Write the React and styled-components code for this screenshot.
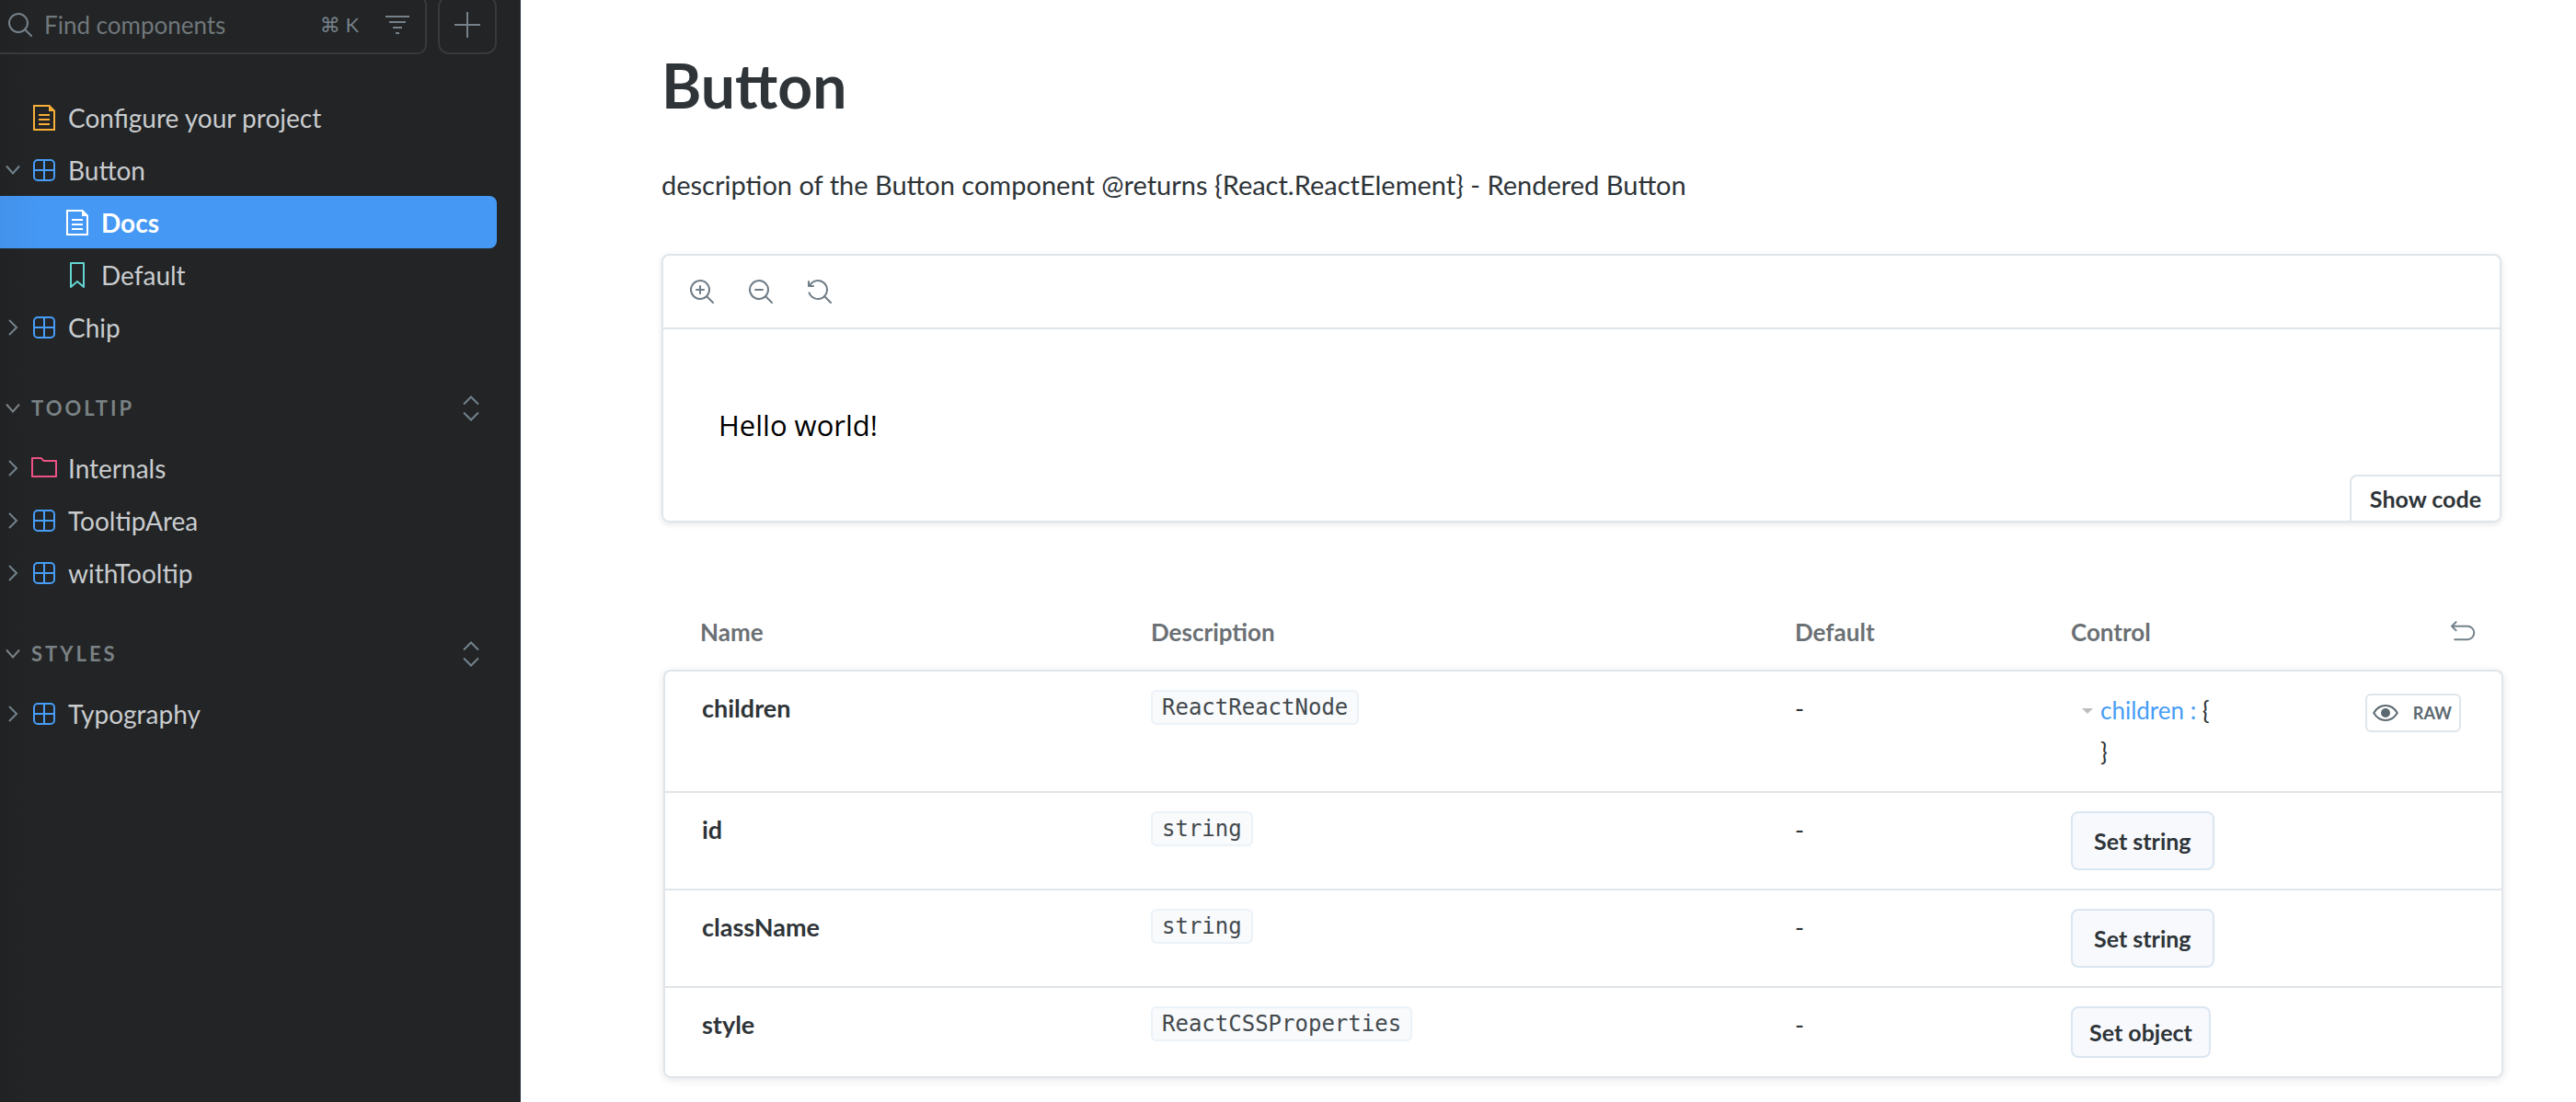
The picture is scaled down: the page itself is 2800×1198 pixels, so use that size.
import React from 'react';
import styled, { createGlobalStyle } from 'styled-components';

const GlobalStyle = createGlobalStyle`
  *, *::before, *::after { box-sizing: border-box; }
  body { margin: 0; background: #ffffff; }
  body, button, input { font-family: Lato, "Open Sans", sans-serif; }
  button { margin: 0; padding: 0; border: 0; background: none; color: inherit; cursor: pointer; }
  svg { display: block; flex: none; }
`;

const color = {
  line: '#dfe5ea',
  ink: '#2e3438',
  muted: '#73828c',
  blue: '#479df7',
  yellow: '#f8ae37',
  teal: '#63d6d3',
  pink: '#ee5284',
};

/* ---------- icons ---------- */

const Glyph = ({ size = 28, tint = 'currentColor', children }) => (
  <svg width={size} height={size} viewBox="0 0 14 14" fill={tint} fillRule="evenodd" clipRule="evenodd" aria-hidden="true">
    {children}
  </svg>
);

const LENS =
  'M9.544 10.206a5.5 5.5 0 11.662-.662.5.5 0 01.148.102l3 3a.5.5 0 01-.708.708l-3-3a.5.5 0 01-.102-.148zM10.5 6a4.5 4.5 0 11-9 0 4.5 4.5 0 019 0z';

const SearchIcon = () => <Glyph><path d={LENS} /></Glyph>;
const ZoomInIcon = () => (
  <Glyph>
    <path d="M6 3.5a.5.5 0 01.5.5v1.5H8a.5.5 0 010 1H6.5V8a.5.5 0 01-1 0V6.5H4a.5.5 0 010-1h1.5V4a.5.5 0 01.5-.5z" />
    <path d={LENS} />
  </Glyph>
);
const ZoomOutIcon = () => (
  <Glyph>
    <path d="M4 5.5a.5.5 0 000 1h4a.5.5 0 000-1H4z" />
    <path d={LENS} />
  </Glyph>
);
const ZoomResetIcon = () => (
  <Glyph>
    <path d="M1.5 2.837V1.5a.5.5 0 00-1 0V4a.5.5 0 00.5.5h2.5a.5.5 0 000-1H2.258a4.5 4.5 0 11-.496 4.016.5.5 0 10-.942.337 5.502 5.502 0 008.724 2.353.5.5 0 00.102.148l3 3a.5.5 0 00.708-.708l-3-3a.5.5 0 00-.148-.102A5.5 5.5 0 101.5 2.837z" />
  </Glyph>
);
const FilterIcon = () => (
  <Glyph><path d="M.5 2h13v1H.5zM2.5 5h9v1h-9zM4.5 8h5v1h-5zM6 11h2v1H6z" /></Glyph>
);
const PlusIcon = () => (
  <Glyph><path d="M6.5 0h1v6.5H14v1H7.5V14h-1V7.5H0v-1h6.5z" /></Glyph>
);
const DocumentIcon = ({ tint }) => (
  <Glyph tint={tint}>
    <path d="M4 5h6v1H4zM4 7.5h6v1H4zM4 10h6v1H4z" />
    <path d="M1 0h9l3 3v11H1zM2 1v12h10V3.5H9.5V1z" />
  </Glyph>
);
const ComponentIcon = ({ tint }) => (
  <Glyph tint={tint}>
    <path d="M3.5 1A2.5 2.5 0 001 3.5v7A2.5 2.5 0 003.5 13h7a2.5 2.5 0 002.5-2.5v-7A2.5 2.5 0 0010.5 1h-7zM12 6.5H7.5V2h3A1.5 1.5 0 0112 3.5v3zm0 1v3a1.5 1.5 0 01-1.5 1.5h-3V7.5H12zM6.5 12V7.5H2v3A1.5 1.5 0 003.5 12h3zM2 6.5h4.5V2h-3A1.5 1.5 0 002 3.5v3z" />
  </Glyph>
);
const BookmarkIcon = ({ tint }) => (
  <Glyph tint={tint}>
    <path d="M3.5 0h7a.5.5 0 01.5.5v13a.5.5 0 01-.825.38L7 11.159l-3.175 2.72A.5.5 0 013 13.5V.5a.5.5 0 01.5-.5zM4 12.413l2.664-2.284a.5.5 0 01.661-.008L10 12.412V1H4v11.413z" />
  </Glyph>
);
const FolderIcon = ({ tint }) => (
  <Glyph tint={tint}>
    <path d="M6.586 3.504l-1.5-1.5H1v9h12v-7.5H6.586zm.414-1L5.793 1.297a1 1 0 00-.707-.293H.5a.5.5 0 00-.5.5v10a.5.5 0 00.5.5h13a.5.5 0 00.5-.5v-8.5a.5.5 0 00-.5-.5H7z" />
  </Glyph>
);
const EyeIcon = () => (
  <Glyph>
    <circle cx="7" cy="7" r="2.5" />
    <path d="M.6 7C2.200 4.300 4.400 3 7 3s4.800 1.300 6.400 4c-1.600 2.700-3.800 4-6.400 4S2.200 9.700.6 7z" fill="none" stroke="currentColor" strokeLinejoin="round" />
  </Glyph>
);
const UndoIcon = () => (
  <Glyph>
    <path d="M3.3 1.6L1 3.900l2.300 2.300M1.200 3.900h8.300a3.600 3.600 0 010 7.200H2.600" fill="none" stroke="currentColor" strokeLinecap="round" strokeLinejoin="round" />
  </Glyph>
);
const Chevron = ({ open }) => (
  <svg width="20" height="20" viewBox="0 0 20 20" fill="none" stroke="currentColor" strokeWidth="2" aria-hidden="true">
    <path d={open ? 'M3 5.5l7 8 7-8' : 'M6 2l8 8-8 8'} />
  </svg>
);
const ExpandIcon = () => (
  <svg width="28" height="28" viewBox="0 0 28 28" fill="none" stroke="currentColor" strokeWidth="2" aria-hidden="true">
    <path d="M6 9.500l8-8 8 8M6 18.500l8 8 8-8" />
  </svg>
);

/* ---------- sidebar ---------- */

const Shell = styled.div`
  display: flex;
  min-height: 100vh;
  overflow: hidden;
`;

const Sidebar = styled.aside`
  flex: 0 0 566px;
  min-width: 0;
  padding-right: 25px;
  border-right: 1px solid #29323d;
  background: linear-gradient(90deg, #202223, #222425 30px);
  color: #c9cccf;
`;

const SearchRow = styled.div`
  display: flex;
  gap: 12px;
  margin-top: -5px;
  margin-bottom: 40px;
  color: #76818a;
`;

const SearchBox = styled.form`
  flex: 1;
  min-width: 0;
  display: flex;
  align-items: center;
  height: 64px;
  padding: 0 16px 0 8px;
  border: 2px solid #37393c;
  border-left: 0;
  border-radius: 0 10px 10px 0;
`;

const SearchInput = styled.input`
  flex: 1;
  min-width: 0;
  margin: 0 12px;
  padding: 0;
  border: 0;
  outline: 0;
  background: transparent;
  color: inherit;
  font-size: 26px;
  line-height: 32px;
  &::placeholder { color: #70777b; opacity: 1; }
`;

const Shortcut = styled.kbd`
  margin-right: 28px;
  font: 22px/32px Lato, "DejaVu Sans", sans-serif;
`;

const AddButton = styled.button`
  display: grid;
  place-items: center;
  flex: none;
  width: 64px;
  height: 64px;
  border: 2px solid #37393c;
  border-radius: 12px;
`;

const TreeList = styled.ul`
  margin: 0;
  padding: 0;
  list-style: none;
`;

const TreeLink = styled.a`
  display: flex;
  align-items: center;
  gap: 12px;
  height: 57px;
  padding-left: ${(p) => (p.$nested ? '36px' : '0')};
  border-radius: 0 8px 8px 0;
  background: ${(p) => (p.$active ? 'linear-gradient(90deg, #4391ea, #4599f5 50px)' : 'none')};
  color: ${(p) => (p.$active ? '#ffffff' : 'inherit')};
  font-size: 28px;
  font-weight: ${(p) => (p.$active ? 700 : 400)};
  line-height: 40px;
  text-decoration: none;
`;

const TreeIcons = styled.span`
  display: flex;
  align-items: center;
  color: ${color.muted};
`;

const ChevronSlot = styled.span`
  width: 34px;
  padding-left: 4px;
`;

const GroupHeader = styled.div`
  display: flex;
  align-items: center;
  justify-content: space-between;
  height: 56px;
  margin: 32px 0 8px;
  padding-right: 14px;
  color: ${color.muted};
`;

const GroupToggle = styled.button`
  display: flex;
  align-items: center;
  color: #7a8184;
  font-size: 22px;
  font-weight: 700;
  line-height: 32px;
  letter-spacing: 3px;
`;

const kinds = {
  docs: [DocumentIcon, color.yellow],
  component: [ComponentIcon, color.blue],
  story: [BookmarkIcon, color.teal],
  folder: [FolderIcon, color.pink],
};

function TreeItem({ kind, label, open, leaf, nested, active }) {
  const [Icon, tint] = kinds[kind];
  return (
    <li>
      <TreeLink href="#" $nested={nested} $active={active} aria-current={active ? 'page' : undefined}>
        <TreeIcons>
          <ChevronSlot>{!leaf && <Chevron open={open} />}</ChevronSlot>
          <Icon tint={active ? '#ffffff' : tint} />
        </TreeIcons>
        {label}
      </TreeLink>
    </li>
  );
}

function Group({ title, children }) {
  return (
    <section>
      <GroupHeader>
        <GroupToggle type="button" aria-expanded="true">
          <ChevronSlot><Chevron open /></ChevronSlot>
          {title}
        </GroupToggle>
        <button type="button" aria-label={`Expand all in ${title}`}><ExpandIcon /></button>
      </GroupHeader>
      <TreeList>{children}</TreeList>
    </section>
  );
}

/* ---------- docs page ---------- */

const Main = styled.main`
  flex: 1;
  min-width: 0;
  padding: 57px 79px 24px 153px;
  color: ${color.ink};
`;

const Title = styled.h1`
  margin: 0 0 48px;
  font-size: 66px;
  font-weight: 700;
  line-height: 72px;
`;

const Lead = styled.p`
  margin: 0 0 51px;
  font-size: 29px;
  line-height: 48px;
`;

const Preview = styled.section`
  position: relative;
  margin-right: 2px;
  border: 2px solid ${color.line};
  border-radius: 8px;
  box-shadow: 0 2px 6px rgba(0, 0, 0, 0.1);
`;

const PreviewBar = styled.div`
  display: flex;
  align-items: center;
  gap: 36px;
  height: 80px;
  padding-left: 28px;
  border-bottom: 2px solid ${color.line};
  color: #707d87;
`;

const Canvas = styled.div`
  padding: 84px 60px;
  color: #000000;
  font-family: "Open Sans", sans-serif;
  font-size: 31px;
  line-height: 40px;
`;

const ShowCode = styled.button`
  position: absolute;
  right: 0;
  bottom: 0;
  height: 50px;
  padding: 0 20px;
  border: 2px solid ${color.line};
  border-width: 2px 0 0 2px;
  border-radius: 8px 0 6px 0;
  background: #ffffff;
  color: ${color.ink};
  font-size: 25px;
  font-weight: 700;
`;

const ArgsTable = styled.table`
  width: calc(100% - 2px);
  margin: 78px 0 0 2px;
  border-collapse: separate;
  border-spacing: 0;
  table-layout: fixed;
  text-align: left;
`;

const Col = styled.col`
  width: ${(p) => p.$width};
`;

const HeadCell = styled.th`
  height: 82px;
  padding: 0 30px;
  color: #6b7074;
  font-size: 26px;
  font-weight: 700;
  line-height: 40px;
  &:first-child { padding-left: 40px; }
`;

const HeadSplit = styled.div`
  display: flex;
  align-items: center;
  justify-content: space-between;
`;

const ResetButton = styled.button`
  color: ${color.muted};
`;

const Body = styled.tbody`
  border-radius: 8px;
  box-shadow: 0 2px 10px rgba(0, 0, 0, 0.1);
`;

const Cell = styled.td`
  padding: 20px 30px;
  border-top: 2px solid ${color.line};
  background: #ffffff;
  font-size: 27px;
  line-height: 40px;
  vertical-align: top;
  &:first-child { padding-left: 40px; border-left: 2px solid ${color.line}; font-weight: 700; }
  &:last-child { border-right: 2px solid ${color.line}; }
  tr:first-child > &:first-child { border-top-left-radius: 8px; }
  tr:first-child > &:last-child { border-top-right-radius: 8px; }
  tr:last-child > & { border-bottom: 2px solid ${color.line}; }
  tr:last-child > &:first-child { border-bottom-left-radius: 8px; }
  tr:last-child > &:last-child { border-bottom-right-radius: 8px; }
`;

const TypeTag = styled.code`
  display: inline-block;
  vertical-align: top;
  padding: 0 10px;
  border: 2px solid #ebf2f8;
  border-radius: 6px;
  background: #f8fafc;
  color: #43494d;
  font: 24px/34px "DejaVu Sans Mono", monospace;
`;

const SetButton = styled.button`
  display: block;
  height: ${(p) => (p.$compact ? '56px' : '64px')};
  padding: 0 ${(p) => (p.$compact ? '18px' : '23px')};
  border: 2px solid #dbe6f1;
  border-radius: 8px;
  background: #f7f9fd;
  color: ${color.ink};
  font-size: 25px;
  font-weight: 700;
`;

const ObjectControl = styled.div`
  display: flex;
  align-items: flex-start;
  justify-content: space-between;
  padding: 0 14px 0 12px;
  font-size: 26px;
  line-height: 45px;
`;

const TreeToggle = styled.button`
  display: flex;
  align-items: center;
  gap: 8px;
  font-size: inherit;
  line-height: inherit;
  &::before {
    content: "";
    border: 6px solid transparent;
    border-top: 6px solid #bbbdbf;
    border-bottom: 0;
  }
`;

const KeyName = styled.span`
  color: ${color.blue};
`;

const Closing = styled.div`
  padding-left: 20px;
`;

const RawButton = styled.button`
  display: flex;
  align-items: center;
  gap: 16px;
  height: 42px;
  margin-top: 4px;
  padding: 0 8px 0 6px;
  border: 2px solid ${color.line};
  border-radius: 6px;
  color: #5c6870;
  font-size: 18px;
  font-weight: 700;
`;

function ChildrenControl() {
  return (
    <ObjectControl>
      <div>
        <TreeToggle type="button" aria-expanded="true">
          <span><KeyName>children : </KeyName>{'{'}</span>
        </TreeToggle>
        <Closing>{'}'}</Closing>
      </div>
      <RawButton type="button"><EyeIcon />RAW</RawButton>
    </ObjectControl>
  );
}

const args = [
  { name: 'children', type: 'ReactReactNode', control: <ChildrenControl /> },
  { name: 'id', type: 'string', control: <SetButton type="button">Set string</SetButton> },
  { name: 'className', type: 'string', control: <SetButton type="button">Set string</SetButton> },
  { name: 'style', type: 'ReactCSSProperties', control: <SetButton type="button" $compact>Set object</SetButton> },
];

export default function App() {
  return (
    <Shell>
      <GlobalStyle />
      <Sidebar>
        <SearchRow>
          <SearchBox role="search">
            <SearchIcon />
            <SearchInput type="text" placeholder="Find components" aria-label="Find components" />
            <Shortcut>⌘ K</Shortcut>
            <button type="button" aria-label="Filter"><FilterIcon /></button>
          </SearchBox>
          <AddButton type="button" aria-label="Create a new story"><PlusIcon /></AddButton>
        </SearchRow>
        <TreeList>
          <TreeItem kind="docs" label="Configure your project" leaf />
          <TreeItem kind="component" label="Button" open />
          <TreeItem kind="docs" label="Docs" leaf nested active />
          <TreeItem kind="story" label="Default" leaf nested />
          <TreeItem kind="component" label="Chip" />
        </TreeList>
        <Group title="TOOLTIP">
          <TreeItem kind="folder" label="Internals" />
          <TreeItem kind="component" label="TooltipArea" />
          <TreeItem kind="component" label="withTooltip" />
        </Group>
        <Group title="STYLES">
          <TreeItem kind="component" label="Typography" />
        </Group>
      </Sidebar>
      <Main>
        <Title>Button</Title>
        <Lead>description of the Button component @returns {'{React.ReactElement}'} - Rendered Button</Lead>
        <Preview>
          <PreviewBar>
            <button type="button" aria-label="Zoom in"><ZoomInIcon /></button>
            <button type="button" aria-label="Zoom out"><ZoomOutIcon /></button>
            <button type="button" aria-label="Reset zoom"><ZoomResetIcon /></button>
          </PreviewBar>
          <Canvas>Hello world!</Canvas>
          <ShowCode type="button">Show code</ShowCode>
        </Preview>
        <ArgsTable>
          <colgroup>
            <Col $width="25%" />
            <Col $width="35%" />
            <Col $width="15%" />
            <Col $width="25%" />
          </colgroup>
          <thead>
            <tr>
              <HeadCell scope="col">Name</HeadCell>
              <HeadCell scope="col">Description</HeadCell>
              <HeadCell scope="col">Default</HeadCell>
              <HeadCell scope="col">
                <HeadSplit>
                  Control
                  <ResetButton type="button" aria-label="Reset controls"><UndoIcon /></ResetButton>
                </HeadSplit>
              </HeadCell>
            </tr>
          </thead>
          <Body>
            {args.map((arg) => (
              <tr key={arg.name}>
                <Cell>{arg.name}</Cell>
                <Cell><TypeTag>{arg.type}</TypeTag></Cell>
                <Cell>-</Cell>
                <Cell>{arg.control}</Cell>
              </tr>
            ))}
          </Body>
        </ArgsTable>
      </Main>
    </Shell>
  );
}
